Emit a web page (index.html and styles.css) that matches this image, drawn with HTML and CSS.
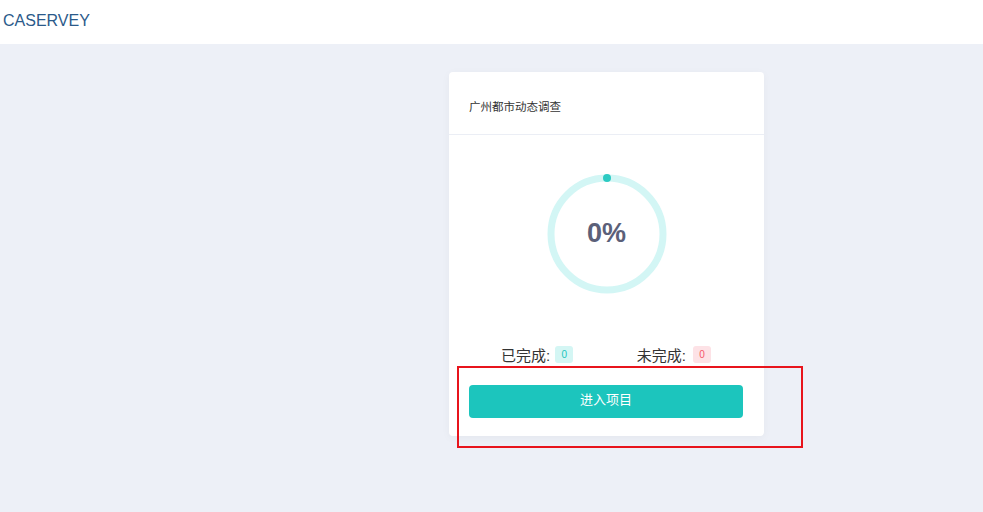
FILE: index.html
```html
<!DOCTYPE html>
<html>
<head>
<meta charset="utf-8">
<link rel="stylesheet" href="styles.css">
</head>
<body>
<header class="topbar"><span class="brand">CASERVEY</span></header>
<main class="content">
  <section class="card">
    <div class="card-head">广州都市动态调查</div>
    <div class="card-body">
      <div class="progress">
        <svg width="126" height="126" viewBox="0 0 126 126">
          <circle cx="63" cy="63" r="56" fill="none" stroke="#d3f6f5" stroke-width="7"/>
          <circle cx="63" cy="7" r="4" fill="#2ccac2"/>
        </svg>
        <span class="pct">0%</span>
      </div>
      <div class="stats">
        <div class="stat">已完成: <span class="badge done">0</span></div>
        <div class="stat">未完成: <span class="badge todo">0</span></div>
      </div>
      <div class="action">
        <button class="enter">进入项目</button>
        <div class="highlight"></div>
      </div>
    </div>
  </section>
</main>
</body>
</html>
```
FILE: styles.css
```css
html, body { margin: 0; padding: 0; }
body {
  background: #edf0f7;
  font-family: "Liberation Sans", "Noto Sans CJK SC", sans-serif;
  width: 983px;
  height: 512px;
  overflow: hidden;
}
.topbar {
  height: 44px;
  background: #fff;
  display: flex;
  align-items: center;
  padding-left: 3px;
}
.brand {
  font-size: 16px;
  color: #2b5a8a;
  margin-top: -3px;
}
.content {
  padding: 28px 0 0 449px;
}
.card {
  width: 315px;
  background: #fff;
  border-radius: 4px;
  box-shadow: 0 2px 10px rgba(0,0,0,0.04);
}
.card-head {
  height: 63px;
  box-sizing: border-box;
  padding: 26px 20px 0;
  font-size: 11.5px;
  color: #333;
  border-bottom: 1px solid #ebeef5;
}
.card-body {
  padding: 36px 20px 18px;
}
.progress {
  position: relative;
  width: 126px;
  height: 126px;
  margin: 0 auto;
}
.progress svg { display: block; }
.pct {
  position: absolute;
  inset: 0;
  display: flex;
  align-items: center;
  justify-content: center;
  font-size: 27px;
  font-weight: bold;
  color: #5b6079;
  padding-bottom: 2px;
}
.stats {
  display: flex;
  justify-content: space-between;
  padding: 0 33px 0 32px;
  margin-top: 47px;
  font-size: 15px;
  color: #333;
  height: 20px;
}
.stat { display: flex; align-items: center; }
.badge {
  display: inline-block;
  margin-left: 5px;
  width: 18px;
  height: 17px;
  line-height: 17px;
  text-align: center;
  font-size: 10px;
  border-radius: 3px;
}
.done { background: #d4f6f4; color: #1cc5bd; }
.todo { background: #fde2e6; color: #f5586c; margin-left: 7px; }
.action {
  position: relative;
  margin-top: 21px;
}
.enter {
  display: block;
  width: 274px;
  height: 33px;
  border: none;
  border-radius: 4px;
  background: #1cc5bd;
  color: #fff;
  font-size: 13px;
  line-height: 30px;
  padding: 0 0 3px;
  font-family: "Liberation Sans", "Noto Sans CJK SC", sans-serif;
}
.highlight {
  position: absolute;
  left: -12px;
  top: -19px;
  width: 342px;
  height: 78px;
  border: 2px solid #e8141c;
}
```
